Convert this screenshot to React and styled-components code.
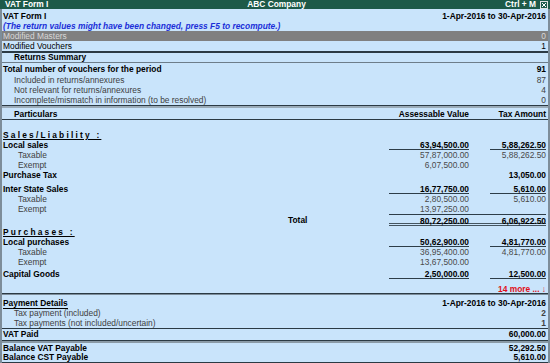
import React from 'react';
import styled, { createGlobalStyle } from 'styled-components';

const GlobalStyle = createGlobalStyle`
  html, body {
    margin: 0;
    padding: 0;
    background: #c9e4fb;
  }
  body {
    font-family: "Liberation Sans", Arial, sans-serif;
  }
`;

const Screen = styled.div`
  width: 550px;
  height: 363px;
  overflow: hidden;
  background: #c9e4fb;
  display: flex;
  flex-direction: column;
  font-size: 8.4px;
  color: #000;
`;

const TitleBar = styled.div`
  flex: none;
  height: 9px;
  line-height: 9px;
  background: #1d5a49;
  color: #fff;
  font-weight: bold;
  display: grid;
  grid-template-columns: 1fr auto 1fr;
  align-items: center;
  padding: 0 2px 0 5px;
`;

const TitleRight = styled.div`
  display: flex;
  justify-content: flex-end;
  align-items: center;
  gap: 4px;
`;

const CloseBox = styled.span`
  width: 6px;
  height: 6px;
  border: 1px solid #e0e0e0;
  display: flex;
  align-items: center;
  justify-content: center;
`;

const Body = styled.div`
  flex: 1;
  min-height: 0;
  display: flex;
  flex-direction: column;
  border-left: 2px solid #7d8d9a;
  border-right: 2px solid #7d8d9a;
`;

const Row = styled.div`
  flex: none;
  display: flex;
  align-items: center;
  height: ${(p) => p.h || 10}px;
  line-height: ${(p) => p.h || 10}px;
  padding: 0 2px 0 ${(p) => p.indent || 1}px;
  background: ${(p) => (p.shaded ? '#808080' : 'transparent')};
  color: ${(p) => (p.shaded ? '#d8d8d8' : p.muted ? '#404040' : '#000')};
  font-weight: ${(p) => (p.bold ? 'bold' : 'normal')};
  font-style: ${(p) => (p.italic ? 'italic' : 'normal')};
  border-top: ${(p) => p.top || 'none'};
  border-bottom: ${(p) => p.bottom || 'none'};
  white-space: nowrap;
`;

const Label = styled.div`
  flex: 1;
  color: ${(p) => p.color || 'inherit'};
`;

const SectionTitle = styled.span`
  letter-spacing: 2.2px;
  text-decoration: underline;
  font-weight: bold;
`;

const Underlined = styled.span`
  border-bottom: 1px solid #000;
  line-height: 8px;
`;

const Cell = styled.div`
  width: ${(p) => p.w}px;
  margin-left: ${(p) => p.gap || 0}px;
  text-align: right;
  height: 100%;
  box-sizing: border-box;
  border-bottom: ${(p) => (p.rule ? '1px solid #2d3d48' : 'none')};
  color: ${(p) => (p.muted ? '#4a4a4a' : 'inherit')};
`;

const TotalBox = styled.div`
  width: 157px;
  display: flex;
  height: 100%;
  box-sizing: border-box;
  border-top: 1px solid #2d3d48;
  border-bottom: 3px double #44545f;
`;

const TotalLabel = styled.div`
  padding-left: 285px;
  flex: 1;
`;

const Spacer = styled.div`
  height: ${(p) => p.h}px;
  flex: none;
`;

const Fill = styled.div`
  flex: 1;
`;

const Rule = styled.div`
  flex: none;
  height: ${(p) => p.h || 1}px;
  background: ${(p) => p.c || '#2d3d48'};
  border-bottom: ${(p) => p.under || 'none'};
`;

const More = styled.span`
  color: #e0101a;
  font-weight: bold;
`;

const COL1 = 80;
const COL2 = 56;
const GAP = 21;

const ValueRow = ({ label, a, b, sub, bold, rule }) => (
  <Row indent={sub ? 16 : 1} bold={bold} muted={sub}>
    <Label>{label}</Label>
    <Cell w={COL1} rule={rule && a} muted={sub}>{a}</Cell>
    <Cell w={COL2} gap={GAP} rule={rule && b} muted={sub}>{b}</Cell>
  </Row>
);

const summary = [
  ['Included in returns/annexures', '87'],
  ['Not relevant for returns/annexures', '4'],
  ['Incomplete/mismatch in information (to be resolved)', '0'],
];

export default function App() {
  return (
    <Screen>
      <GlobalStyle />
      <TitleBar>
        <span>VAT Form I</span>
        <span>ABC Company</span>
        <TitleRight>
          <span>Ctrl + M</span>
          <CloseBox>
            <svg width="4" height="4" viewBox="0 0 4 4">
              <path d="M0 0L4 4M4 0L0 4" stroke="#fff" strokeWidth="1" />
            </svg>
          </CloseBox>
        </TitleRight>
      </TitleBar>
      <Body>
        <Spacer h={2} />
        <Row bold>
          <Label>VAT Form I</Label>
          <span>1-Apr-2016 to 30-Apr-2016</span>
        </Row>
        <Row bold italic>
          <Label color="#1b2fd8">(The return values might have been changed, press F5 to recompute.)</Label>
        </Row>
        <Row shaded>
          <Label>Modified Masters</Label>
          <span>0</span>
        </Row>
        <Row>
          <Label>Modified Vouchers</Label>
          <span>1</span>
        </Row>
        <Rule h={2} c="#2b3a44" />
        <Row h={9} bold indent={12} bottom="1px solid #6d7d8a">
          <Label>Returns Summary</Label>
        </Row>
        <Spacer h={1} />
        <Row h={11} bold>
          <Label>Total number of vouchers for the period</Label>
          <span>91</span>
        </Row>
        {summary.map(([l, v]) => (
          <Row key={l} indent={12} muted>
            <Label>{l}</Label>
            <span>{v}</span>
          </Row>
        ))}
        <Rule h={1} c="#2b3a44" under="2px solid #9aabb8" />
        <Spacer h={2} />
        <Row h={9} bold indent={12} bottom="1px solid #2b3a44">
          <Label>Particulars</Label>
          <Cell w={COL1}>Assessable Value</Cell>
          <Cell w={COL2} gap={GAP}>Tax Amount</Cell>
        </Row>
        <Spacer h={10} />
        <Row>
          <SectionTitle>Sales/Liability :</SectionTitle>
        </Row>
        <ValueRow label="Local sales" a="63,94,500.00" b="5,88,262.50" bold rule />
        <ValueRow label="Taxable" a="57,87,000.00" b="5,88,262.50" sub />
        <ValueRow label="Exempt" a="6,07,500.00" sub />
        <ValueRow label="Purchase Tax" b="13,050.00" bold />
        <Spacer h={4} />
        <ValueRow label="Inter State Sales" a="16,77,750.00" b="5,610.00" bold rule />
        <ValueRow label="Taxable" a="2,80,500.00" b="5,610.00" sub />
        <ValueRow label="Exempt" a="13,97,250.00" sub />
        <Row h={12} bold>
          <TotalLabel>Total</TotalLabel>
          <TotalBox>
            <Cell w={COL1}>80,72,250.00</Cell>
            <Cell w={COL2} gap={GAP}>6,06,922.50</Cell>
          </TotalBox>
        </Row>
        <Spacer h={1} />
        <Row>
          <SectionTitle>Purchases :</SectionTitle>
        </Row>
        <ValueRow label="Local purchases" a="50,62,900.00" b="4,81,770.00" bold rule />
        <ValueRow label="Taxable" a="36,95,400.00" b="4,81,770.00" sub />
        <ValueRow label="Exempt" a="13,67,500.00" sub />
        <Spacer h={2} />
        <ValueRow label="Capital Goods" a="2,50,000.00" b="12,500.00" bold rule />
        <Fill />
        <Row h={8}>
          <Label />
          <More>14 more ... ↓</More>
        </Row>
        <Rule h={1} c="#2b3a44" under="1px solid #7d8d9a" />
        <Spacer h={3} />
        <Row bold>
          <Label>
            <Underlined>Payment Details</Underlined>
          </Label>
          <span>1-Apr-2016 to 30-Apr-2016</span>
        </Row>
        <Row indent={12} muted>
          <Label>Tax payment (included)</Label>
          <b>2</b>
        </Row>
        <Row indent={12} muted>
          <Label>Tax payments (not included/uncertain)</Label>
          <b>1</b>
        </Row>
        <Row h={11} bold top="1px solid #2b3a44">
          <Label>VAT Paid</Label>
          <span>60,000.00</span>
        </Row>
        <Rule h={1} c="#2b3a44" under="2px solid #8a9aa6" />
        <Row bold>
          <Label>Balance VAT Payable</Label>
          <span>52,292.50</span>
        </Row>
        <Row h={9} bold bottom="1px solid #2b3a44">
          <Label>Balance CST Payable</Label>
          <span>5,610.00</span>
        </Row>
      </Body>
    </Screen>
  );
}
